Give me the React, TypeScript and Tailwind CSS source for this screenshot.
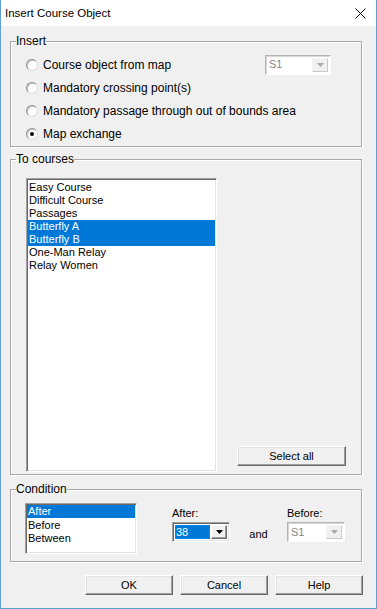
import { FC, ReactNode } from "react";

const font = { fontFamily: '"Liberation Sans", Arial, sans-serif' };

const Radio: FC<{ checked?: boolean; label: string; children?: ReactNode }> = ({
  checked,
  label,
  children,
}) => (
  <div className="h-[23px] flex items-center">
    <span className="ml-[15px] w-[12px] h-[12px] rounded-full bg-white border border-t-[#8f8f8f] border-l-[#8f8f8f] border-r-[#dcdcdc] border-b-[#dcdcdc] shadow-[inset_1px_1px_0_#c8c8c8] flex items-center justify-center">
      {checked && <span className="w-[4px] h-[4px] rounded-full bg-black"></span>}
    </span>
    <span className="ml-[5px] text-[12px]">{label}</span>
    {children}
  </div>
);

const Arrow: FC<{ disabled?: boolean }> = ({ disabled }) => (
  <svg width="7" height="4" viewBox="0 0 7 4">
    <path d="M0 0H7L3.5 4Z" fill={disabled ? "#a8a8a8" : "#000"} />
  </svg>
);

const Combo: FC<{ value: string; disabled?: boolean; width: string }> = ({
  value,
  disabled,
  width,
}) => (
  <div
    className={`${width} h-[20px] flex bg-white border ${
      disabled
        ? "border-t-[#b4b4b4] border-l-[#b4b4b4] border-r-white border-b-white shadow-[inset_1px_1px_0_#d8d8d8]"
        : "border-t-[#a0a0a0] border-l-[#a0a0a0] border-r-white border-b-white shadow-[inset_1px_1px_0_#696969,inset_-1px_-1px_0_#e3e3e3]"
    } p-[2px]`}
  >
    <div className="flex-1 flex items-center">
      {disabled ? (
        <span className="pl-[1px] text-[#858585]">{value}</span>
      ) : (
        <span className="h-full w-full flex items-center bg-[#0078d7] text-white pl-[1px] outline-1 outline-dotted outline-[#c56a00] -outline-offset-1">
          {value}
        </span>
      )}
    </div>
    <div
      className={`w-[16px] ml-[1px] flex items-center justify-center bg-[#f0f0f0] border ${
        disabled
          ? "border-t-[#f6f6f6] border-l-[#f6f6f6] border-r-[#c8c8c8] border-b-[#c8c8c8]"
          : "border-t-white border-l-white border-r-[#696969] border-b-[#696969] shadow-[inset_-1px_-1px_0_#a0a0a0]"
      }`}
    >
      <Arrow disabled={disabled} />
    </div>
  </div>
);

const Button: FC<{ label: string; className?: string }> = ({ label, className }) => (
  <button
    className={`h-[20px] bg-[#f0f0f0] border border-t-white border-l-white border-r-[#696969] border-b-[#696969] shadow-[inset_-1px_-1px_0_#a0a0a0,inset_1px_1px_0_#e3e3e3] flex items-center justify-center ${className}`}
  >
    {label}
  </button>
);

const Group: FC<{ title: string; className?: string; children: ReactNode }> = ({
  title,
  className,
  children,
}) => (
  <fieldset
    className={`w-[352px] border border-[#a8a8a8] shadow-[inset_1px_1px_0_#fff,1px_1px_0_#fff] ${className}`}
  >
    <legend className="ml-[5px] leading-[14px] text-[12px]">{title}</legend>
    {children}
  </fieldset>
);

const courses = [
  "Easy Course",
  "Difficult Course",
  "Passages",
  "Butterfly A",
  "Butterfly B",
  "One-Man Relay",
  "Relay Women",
];
const selected = ["Butterfly A", "Butterfly B"];

const listBox =
  "bg-white border border-t-[#a0a0a0] border-l-[#a0a0a0] border-r-white border-b-white shadow-[inset_1px_1px_0_#696969,inset_-1px_-1px_0_#e3e3e3] p-[1px]";

const App: FC = () => {
  return (
    <div
      className="w-[377px] h-[609px] bg-[#f0f0f0] border-l border-r border-b border-[#5fa0d6] flex flex-col text-[11px] text-black"
      style={font}
    >
      {/* Title bar */}
      <div className="h-[26px] shrink-0 bg-white flex items-center pl-[4px] pr-[10px]">
        <span className="text-[11.5px] flex-1 pt-[1px]">Insert Course Object</span>
        <svg width="11" height="11" viewBox="0 0 11 11">
          <path d="M0.5 0.5L10.5 10.5M10.5 0.5L0.5 10.5" stroke="#000" strokeWidth="1" />
        </svg>
      </div>

      <div className="pl-[9px] flex flex-col">
        {/* Insert */}
        <Group title="Insert" className="mt-[8px] pt-[5px] pb-[1px]">
          <Radio label="Course object from map">
            <div className="ml-auto mr-[30px]">
              <Combo value="S1" disabled width="w-[66px]" />
            </div>
          </Radio>
          <Radio label="Mandatory crossing point(s)" />
          <Radio label="Mandatory passage through out of bounds area" />
          <Radio label="Map exchange" checked />
        </Group>

        {/* To courses */}
        <Group title="To courses" className="mt-[5px] pt-[12px] pb-[2px]">
          <div className="flex items-end">
            <div className={`${listBox} ml-[15px] w-[191px] h-[294px]`}>
              <div className="pt-[1px]">
                {courses.map((c) => (
                  <div
                    key={c}
                    className={`h-[13px] leading-[13px] pl-[1px] ${
                      selected.includes(c) ? "bg-[#0078d7] text-white" : ""
                    }`}
                  >
                    {c}
                  </div>
                ))}
              </div>
            </div>
            <Button label="Select all" className="ml-[20px] mb-[6px] w-[109px]" />
          </div>
        </Group>

        {/* Condition */}
        <Group title="Condition" className="mt-[7px] pt-[7px] pb-[7px]">
          <div className="flex items-start">
            <div className={`${listBox} ml-[14px] w-[112px] h-[51px]`}>
              <div className="h-[13px] leading-[13px] pl-[1px] bg-[#0078d7] text-white">
                After
              </div>
              <div className="h-[13px] leading-[13px] pl-[1px] pt-[1px]">Before</div>
              <div className="h-[13px] leading-[13px] pl-[1px] pt-[1px]">Between</div>
            </div>
            <div className="ml-[35px] mt-[4px] flex flex-col">
              <span className="leading-[13px] mb-[2px]">After:</span>
              <Combo value="38" width="w-[58px]" />
            </div>
            <div className="w-[57px] mt-[23px] h-[16px] flex items-center justify-center">
              and
            </div>
            <div className="mt-[4px] flex flex-col">
              <span className="leading-[13px] mb-[2px]">Before:</span>
              <Combo value="S1" disabled width="w-[58px]" />
            </div>
          </div>
        </Group>
      </div>

      {/* Buttons */}
      <div className="mt-[13px] flex justify-end pr-[13px] gap-[7px]">
        <Button label="OK" className="w-[88px]" />
        <Button label="Cancel" className="w-[88px]" />
        <Button label="Help" className="w-[88px]" />
      </div>
    </div>
  );
};

export default App;
